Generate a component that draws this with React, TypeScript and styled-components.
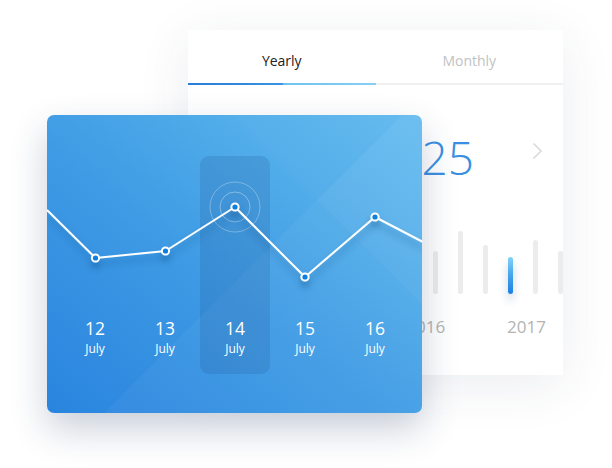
import styled, { createGlobalStyle } from "styled-components";

const GlobalStyle = createGlobalStyle`
  html, body {
    margin: 0;
    padding: 0;
    background: #ffffff;
    font-family: "Open Sans", "Noto Sans", sans-serif;
  }
`;

const days = [
  { day: "12", month: "July" },
  { day: "13", month: "July" },
  { day: "14", month: "July", active: true },
  { day: "15", month: "July" },
  { day: "16", month: "July" },
];

// points of the line, in card coordinates
const points: [number, number][] = [
  [0, 95],
  [48.5, 143],
  [118.5, 136],
  [188, 92],
  [258, 162],
  [328, 102],
  [376, 127],
];

const bars = [
  { h: 30 },
  { h: 52 },
  { h: 38 },
  { h: 46 },
  { h: 43 },
  { h: 63 },
  { h: 49 },
  { h: 37, active: true },
  { h: 54 },
  { h: 43 },
];

export default function App() {
  const line = points.map((p) => p.join(",")).join(" ");

  return (
    <>
      <GlobalStyle />
      <Stage>
        <BackCard>
          <TabBar>
            <Tab $active>Yearly</Tab>
            <Tab>Monthly</Tab>
          </TabBar>
          <ValueRow>
            <Value>1,325</Value>
            <Chevron width="11" height="18" viewBox="0 0 11 18">
              <path d="M1.5 1.5 L9 9 L1.5 16.5" fill="none" stroke="#d9d9d9" strokeWidth="1.6" />
            </Chevron>
          </ValueRow>
          <Bars>
            {bars.map((b, i) => (
              <Bar key={i} $active={b.active} style={{ height: b.h }} />
            ))}
          </Bars>
          <Years>
            <Year>2016</Year>
            <Year>2017</Year>
          </Years>
        </BackCard>

        <FrontCard>
          <Decor viewBox="0 0 375 298" preserveAspectRatio="none">
            <polygon points="186,0 355,0 270,85" fill="rgba(255,255,255,0.02)" />
            <polygon points="355,0 375,0 375,189 270,85" fill="rgba(255,255,255,0.07)" />
            <polygon points="270,85 375,189 375,298 57,298" fill="rgba(255,255,255,0.04)" />
          </Decor>
          <Days>
            {days.map((d) => (
              <DayCol key={d.day} $active={d.active}>
                <DayNum>{d.day}</DayNum>
                <DayMonth>{d.month}</DayMonth>
              </DayCol>
            ))}
          </Days>
          <Chart viewBox="0 0 375 298">
            <defs>
              <filter id="lineShadow" x="-10%" y="-30%" width="120%" height="180%">
                <feDropShadow dx="0" dy="6" stdDeviation="3.5" floodColor="#0a3c78" floodOpacity="0.4" />
              </filter>
            </defs>
            <circle cx="188" cy="92" r="15" fill="none" stroke="rgba(255,255,255,0.35)" strokeWidth="1" />
            <circle cx="188" cy="92" r="25" fill="none" stroke="rgba(255,255,255,0.3)" strokeWidth="1" />
            <g filter="url(#lineShadow)">
              <polyline points={line} fill="none" stroke="#ffffff" strokeWidth="2" strokeLinejoin="round" />
              {points.slice(1, 6).map(([x, y]) => (
                <circle key={x} cx={x} cy={y} r="3.6" fill="#0a7fe0" stroke="#ffffff" strokeWidth="2" />
              ))}
            </g>
          </Chart>
        </FrontCard>
      </Stage>
    </>
  );
}

const Stage = styled.div`
  position: relative;
  width: 612px;
  height: 468px;
  overflow: hidden;
  background: #ffffff;
`;

const BackCard = styled.div`
  position: absolute;
  left: 188px;
  top: 30px;
  width: 375px;
  height: 345px;
  background: #ffffff;
  box-shadow: 0 10px 50px rgba(40, 60, 100, 0.09);
  display: flex;
  flex-direction: column;
  overflow: hidden;
`;

const TabBar = styled.div`
  display: flex;
  border-bottom: 2px solid #efefef;
`;

const Tab = styled.div<{ $active?: boolean }>`
  flex: 1;
  position: relative;
  box-sizing: border-box;
  height: 53px;
  padding-top: 7px;
  display: flex;
  align-items: center;
  justify-content: center;
  font-size: 14px;
  color: ${(p) => (p.$active ? "#222222" : "#c2c2c2")};

  &::after {
    content: "";
    display: ${(p) => (p.$active ? "block" : "none")};
    position: absolute;
    left: 0;
    right: 0;
    bottom: -2px;
    height: 2px;
    background: linear-gradient(90deg, #2a7dd8 0%, #3a92e1 50%, #6fc2f0 51%, #86cff3 100%);
  }
`;

const ValueRow = styled.div`
  margin-top: 49px;
  height: 46px;
  display: flex;
  align-items: center;
  justify-content: flex-end;
  gap: 58px;
  padding-right: 20px;
`;

const Value = styled.div`
  font-size: 46px;
  line-height: 46px;
  font-weight: 300;
  color: #3a8fe2;
`;

const Chevron = styled.svg`
  margin-bottom: 12px;
`;

const Bars = styled.div`
  margin-top: 51px;
  height: 63px;
  display: flex;
  align-items: flex-end;
  justify-content: flex-end;
  gap: 20px;
`;

const Bar = styled.div<{ $active?: boolean }>`
  width: 5px;
  flex-shrink: 0;
  border-radius: 3px;
  background: ${(p) => (p.$active ? "linear-gradient(180deg, #82d2f6 0%, #4aa8ec 45%, #1b7fe0 100%)" : "#ececec")};
  box-shadow: ${(p) => (p.$active ? "0 6px 8px rgba(20, 60, 120, 0.25)" : "none")};
`;

const Years = styled.div`
  margin-top: 23px;
  display: flex;
  justify-content: flex-end;
  gap: 62px;
  padding-right: 17px;
`;

const Year = styled.div`
  font-size: 17px;
  line-height: 20px;
  color: #b3b3b3;
`;

const FrontCard = styled.div`
  position: absolute;
  left: 47px;
  top: 115px;
  width: 375px;
  height: 298px;
  border-radius: 7px;
  overflow: hidden;
  background: linear-gradient(to top right, #2984df 0%, #3f9be4 45%, #53aeea 75%, #63bbef 100%);
  box-shadow: 0 16px 36px rgba(30, 55, 95, 0.24);
`;

const Decor = styled.svg`
  position: absolute;
  inset: 0;
  width: 100%;
  height: 100%;
`;

const Chart = styled.svg`
  position: absolute;
  inset: 0;
  width: 375px;
  height: 298px;
  overflow: visible;
`;

const Days = styled.div`
  position: relative;
  display: flex;
  padding: 41px 0 0 13px;
`;

const DayCol = styled.div<{ $active?: boolean }>`
  width: 70px;
  height: 218px;
  box-sizing: border-box;
  padding-bottom: 17px;
  border-radius: 9px;
  display: flex;
  flex-direction: column;
  align-items: center;
  justify-content: flex-end;
  gap: 2px;
  color: #ffffff;
  background: ${(p) => (p.$active ? "rgba(25, 70, 130, 0.16)" : "transparent")};
`;

const DayNum = styled.div`
  font-size: 17.5px;
  line-height: 22px;
`;

const DayMonth = styled.div`
  font-size: 12px;
  line-height: 16px;
`;
